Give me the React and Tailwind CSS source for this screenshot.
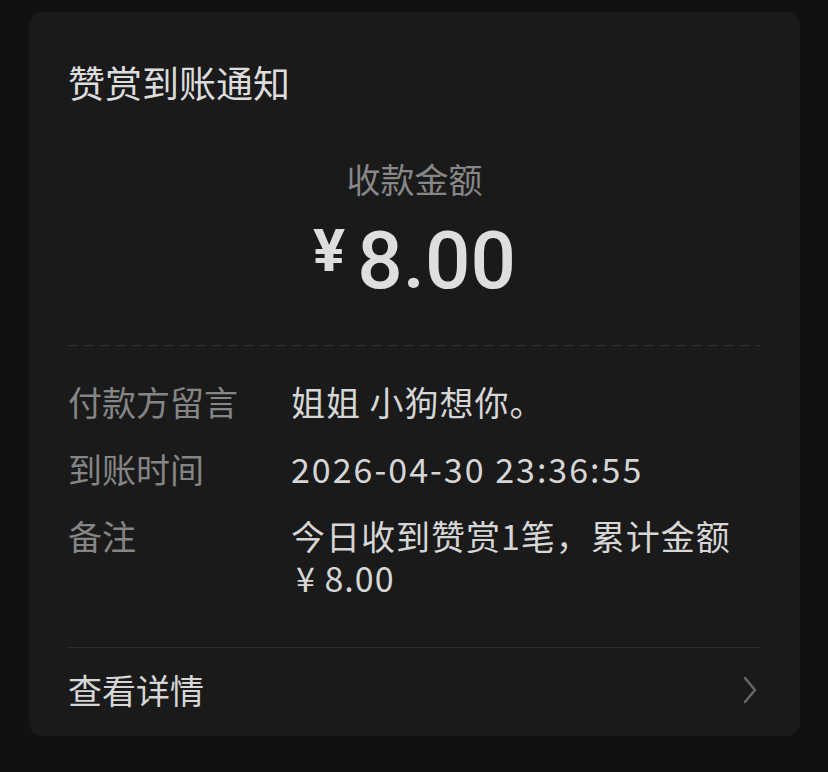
const cjk = { fontFamily: '"Noto Sans CJK SC", "Noto Sans", sans-serif' };
const roboto = { fontFamily: 'Roboto, "Noto Sans", sans-serif' };

function Row({ label, children }) {
    return (
        <div className="flex text-[34px] leading-[42px]">
            <div className="w-[223px] shrink-0 text-[#858585]">{label}</div>
            <div className="flex-1 text-[#d6d6d6] tracking-[1px]">{children}</div>
        </div>
    );
}

export default function App() {
    return (
        <div className="min-h-[772px] w-[828px] bg-[#111111] pt-[12px] pl-[29px]" style={cjk}>
            <div className="w-[771px] h-[724px] rounded-[14px] bg-[#1a1a1a] px-[39px] pt-[46px] pb-[24px] flex flex-col">
                <h1 className="text-[37px] leading-[48px] text-[#dcdcdc] font-normal">赞赏到账通知</h1>

                <div className="mt-[51px] text-center text-[34px] leading-[44px] text-[#878787]">收款金额</div>

                <div className="mt-[20px] flex items-center justify-center h-[80px] shrink-0">
                    <span className="text-[60px] leading-[80px] font-bold text-[#dedede] mr-[12px] mt-[-20px]" style={roboto}>¥</span>
                    <span className="text-[80px] leading-[80px] font-medium text-[#dedede]" style={roboto}>8.00</span>
                </div>

                <div className="mt-[44px] h-px shrink-0 w-full bg-[linear-gradient(to_right,#333333_10px,transparent_10px)] bg-[length:16px_1px]" />

                <div className="mt-[35px] flex flex-col gap-[25px]">
                    <Row label="付款方留言">姐姐 小狗想你。</Row>
                    <Row label="到账时间"><span className="tracking-[2px]">2026-04-30 23:36:55</span></Row>
                    <Row label="备注">
                        今日收到赞赏1笔，累计金额
                        <br /><span className="ml-[5px]">¥ 8.00</span>
                    </Row>
                </div>

                <div className="mt-[48px] h-px shrink-0 w-full bg-[#2e2e2e]" />

                <div className="mt-[21px] flex items-center justify-between text-[34px] leading-[42px] text-[#d6d6d6]">
                    <span>查看详情</span>
                    <svg width="16" height="28" viewBox="0 0 16 28" fill="none" className="mr-[3px]">
                        <path d="M3 2 L13 14 L3 26" stroke="#666666" strokeWidth="2.5" strokeLinecap="round" strokeLinejoin="round" />
                    </svg>
                </div>
            </div>
        </div>
    );
}
